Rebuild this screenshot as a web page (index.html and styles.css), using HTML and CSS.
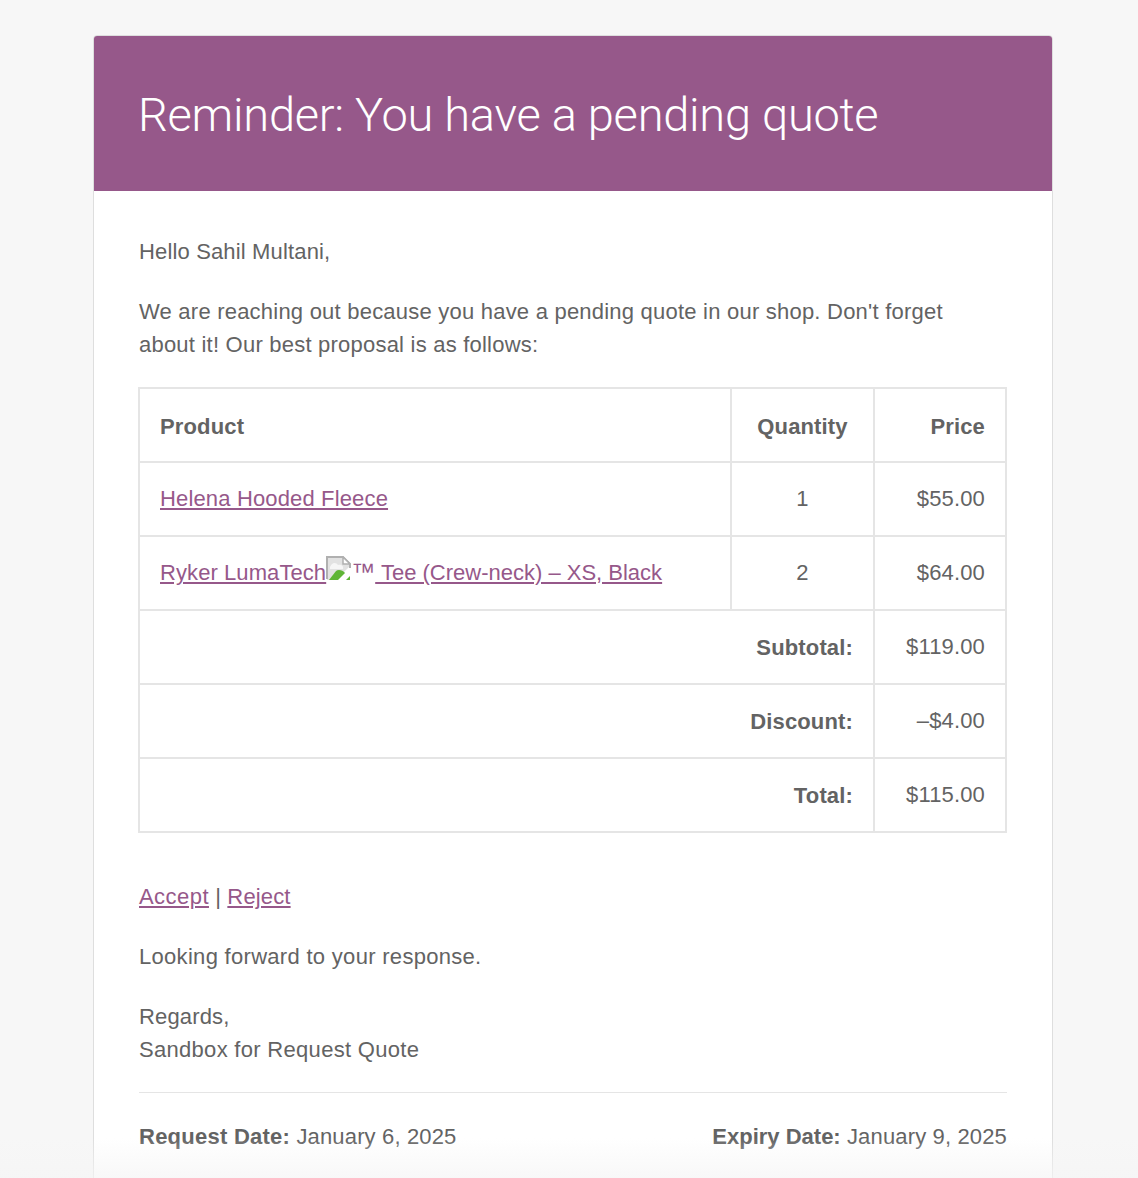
FILE: index.html
```html
<!DOCTYPE html>
<html lang="en">
<head>
<meta charset="utf-8">
<title>Reminder: You have a pending quote</title>
<link rel="stylesheet" href="styles.css">
</head>
<body>
<div class="card">
  <header class="banner"><h1>Reminder: You have a pending quote</h1></header>
  <main class="content">
    <p>Hello Sahil Multani,</p>
    <p class="lead">We are reaching out because you have a pending quote in our shop. Don't forget about it! Our best proposal is as follows:</p>
    <table class="quote">
      <colgroup><col class="c1"><col class="c2"><col class="c3"></colgroup>
      <thead>
        <tr><th class="left">Product</th><th class="center">Quantity</th><th class="right">Price</th></tr>
      </thead>
      <tbody>
        <tr><td class="left"><a href="#">Helena Hooded Fleece</a></td><td class="center">1</td><td class="right">$55.00</td></tr>
        <tr><td class="left"><a href="#"><span class="ryker">Ryker LumaTech</span><svg class="broken" viewBox="0 0 25 24" width="25" height="24" role="img" aria-label="Broken image"><path d="M1 1H17L24 8V24H1Z" fill="#e2e2e2"/><path d="M4 11C6 6 10 6 12 9C15 8 18 10 17 13L4 13Z" fill="#f6f6f6"/><path d="M24 10L10 24H24Z" fill="#fff"/><path d="M3 24L10 15C12 13 17 14 19 17L12 24Z" fill="#5fb536"/><path d="M20 24L24 20V24Z" fill="#5fb536"/><path d="M1 23V1H17L24 8V12" fill="none" stroke="#b0b0b0" stroke-width="2"/><path d="M17 1V8H24Z" fill="#fff" stroke="#b0b0b0" stroke-width="1.5"/></svg><span class="tm">™</span><span class="tee"> Tee (Crew-neck) – XS, Black</span></a></td><td class="center">2</td><td class="right">$64.00</td></tr>
      </tbody>
      <tfoot>
        <tr><th colspan="2" class="right">Subtotal:</th><td class="right">$119.00</td></tr>
        <tr><th colspan="2" class="right">Discount:</th><td class="right">–$4.00</td></tr>
        <tr><th colspan="2" class="right">Total:</th><td class="right">$115.00</td></tr>
      </tfoot>
    </table>
    <p class="actions"><a href="#" class="accept">Accept</a> | <a href="#">Reject</a></p>
    <p class="closing">Looking forward to your response.</p>
    <p class="regards">Regards,<br><span class="closing">Sandbox for Request Quote</span></p>
    <div class="dates">
      <span><b class="request">Request Date:</b> January 6, 2025</span>
      <span><b>Expiry Date:</b> January 9, 2025</span>
    </div>
  </main>
</div>
<div class="fade"></div>
</body>
</html>
```
FILE: styles.css
```css
html, body { margin: 0; padding: 0; height: 100%; overflow: hidden; }
body {
  background: #f7f7f7;
  font-family: "Liberation Sans", Arial, sans-serif;
  font-size: 22px;
  line-height: 33px;
  letter-spacing: 0.15px;
  color: #636363;
  padding-top: 35px;
  box-sizing: border-box;
}
.card {
  width: 960px;
  box-sizing: border-box;
  margin-left: 93px;
  background: #fff;
  border: 1px solid #dedede;
  border-radius: 4px;
}
.banner {
  background: #96588a;
  border-radius: 3px 3px 0 0;
  padding: 46px 44px 0;
  height: 155px;
  box-sizing: border-box;
}
.banner h1 {
  margin: 0;
  font-family: Roboto, "Liberation Sans", sans-serif;
  font-weight: 300;
  font-size: 47px;
  line-height: 66px;
  letter-spacing: -0.27px;
  color: #fff;
}
.content { padding: 44px 45px 0; }
.content p { margin: 0 0 27px; }
.content .lead { max-width: 840px; letter-spacing: 0.22px; margin-bottom: 26px; }
.closing { letter-spacing: 0.3px; }
.accept { letter-spacing: 0.45px; }
.quote {
  width: 867px;
  margin: 0 0 47px -1px;
  border-collapse: collapse;
  table-layout: fixed;
  border: 2px solid #e5e5e5;
}
.c1 { width: 592px; }
.c2 { width: 143px; }
.c3 { width: 132px; }
.quote th, .quote td {
  border: 2px solid #e5e5e5;
  height: 74px;
  padding: 0 20px;
  box-sizing: border-box;
  font-weight: normal;
}
.quote th { font-weight: bold; }
.quote td { padding-bottom: 2px; }
.quote thead th { padding-top: 2px; }
.left { text-align: left; }
.center { text-align: center; }
.right { text-align: right; }
a { color: #96588a; text-decoration: underline; }
.ryker { letter-spacing: 0.08px; }
.broken { display: inline-block; }
.tm { display: inline-block; font-size: 24px; letter-spacing: 0; }
.tee { letter-spacing: 0; }
.content .regards { margin-bottom: 26px; }
.dates {
  border-top: 1px solid #e5e5e5;
  padding-top: 27px;
  display: flex;
  justify-content: space-between;
  width: 868px;
  padding-bottom: 60px;
}
.dates b { font-weight: bold; letter-spacing: 0; }
.dates .request { letter-spacing: 0.25px; }
.fade {
  position: absolute;
  left: 0;
  right: 0;
  bottom: 0;
  height: 40px;
  background: linear-gradient(to bottom, rgba(245,245,245,0), rgba(245,245,245,0.7));
  pointer-events: none;
}
```
